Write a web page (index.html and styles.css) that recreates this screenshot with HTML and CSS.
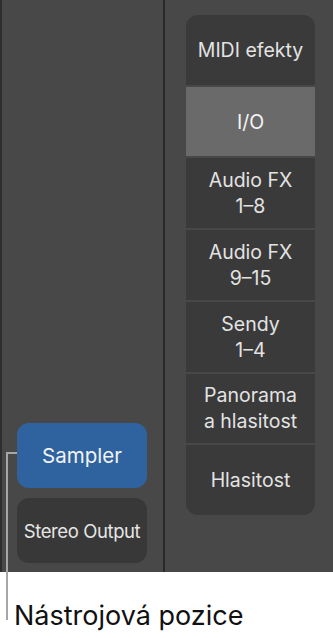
FILE: index.html
```html
<!DOCTYPE html>
<html lang="cs">

<head>
    <meta http-equiv="Content-Type" content="text/html;charset=UTF-8">
    <meta name="viewport" content="width=device-width, initial-scale=1.0">
    <title>Nástrojová pozice</title>
    <link rel="stylesheet" href="styles.css">
</head>

<body>
    <div class="mixer">
        <div class="edge"></div>

        <section class="channel">
            <button class="slot slot-instrument">Sampler</button>
            <button class="slot slot-output">Stereo Output</button>
        </section>

        <div class="divider"></div>

        <section class="views">
            <ul class="view-list">
                <li class="view">MIDI efekty</li>
                <li class="view view-active">I/O</li>
                <li class="view">Audio FX<br>1–8</li>
                <li class="view">Audio FX<br>9–15</li>
                <li class="view">Sendy<br>1–4</li>
                <li class="view">Panorama<br>a hlasitost</li>
                <li class="view">Hlasitost</li>
            </ul>
        </section>
    </div>

    <div class="callout-line"></div>
    <p class="callout">Nástrojová pozice</p>
</body>

</html>
```

FILE: styles.css
```css
body {
    margin: 0;
    position: relative;
    background-color: #ffffff;
    font-family: Inter, "Liberation Sans", Arial, sans-serif;
}

.mixer {
    display: flex;
    height: 572px;
    background-color: #484848;
}

.edge {
    width: 2px;
    background-color: #2e2e2e;
}

.divider {
    width: 2px;
    background-color: #2a2a2a;
}

.channel {
    width: 161px;
    display: flex;
    flex-direction: column;
    justify-content: flex-end;
    gap: 10px;
    padding: 0 0 9px 15px;
    box-sizing: border-box;
}

.slot {
    width: 130px;
    height: 65px;
    border: none;
    border-radius: 12px;
    color: #e6e6e6;
    font-family: inherit;
    padding: 0;
}

.slot-instrument {
    background-color: #2f63a0;
    color: #f2f2f2;
    font-size: 20.5px;
}

.slot-output {
    background-color: #383838;
    font-size: 18.5px;
    letter-spacing: -0.4px;
}

.views {
    flex: 1;
    padding: 15px 18px 0 21px;
}

.view-list {
    list-style: none;
    margin: 0;
    padding: 0;
    height: 500px;
    display: flex;
    flex-direction: column;
    gap: 2px;
    border-radius: 12px;
    overflow: hidden;
}

.view {
    flex: 1;
    display: flex;
    align-items: center;
    justify-content: center;
    text-align: center;
    background-color: #3a3a3a;
    color: #e3e3e3;
    font-size: 19.5px;
    line-height: 26px;
}

.view-active {
    background-color: #6a6a6a;
    color: #f4f4f4;
}

.callout-line {
    position: absolute;
    left: 6px;
    top: 452px;
    width: 11px;
    height: 168px;
    border-left: 2px solid #a6a6a6;
    border-top: 2px solid #a6a6a6;
    box-sizing: border-box;
}

.callout {
    margin: 0;
    padding: 27px 0 0 14px;
    font-size: 27px;
    color: #111111;
}
```
